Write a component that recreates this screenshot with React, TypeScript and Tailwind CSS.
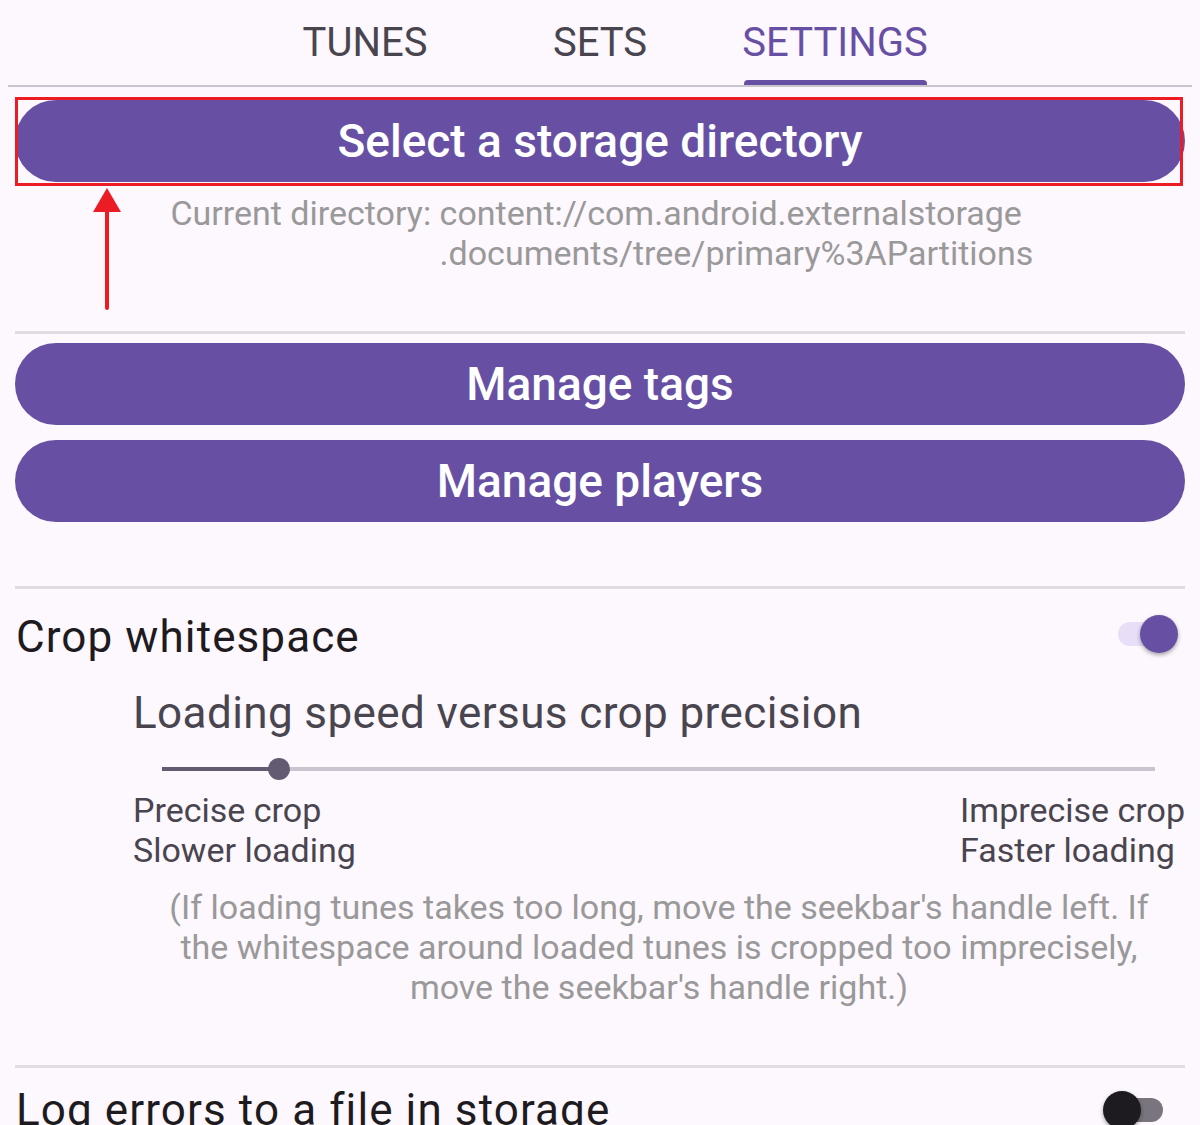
import React from "react";

const Divider: React.FC<{ className?: string }> = ({ className = "" }) => (
  <div className={`h-[3px] bg-[#e0dce2] ${className}`} />
);

const PillButton: React.FC<{ label: string; className?: string }> = ({ label, className = "" }) => (
  <button
    className={`flex h-[82px] w-full items-center justify-center rounded-full bg-[#6750a4] text-[46px] font-medium text-white ${className}`}
  >
    {label}
  </button>
);

const Switch: React.FC<{ on: boolean }> = ({ on }) =>
  on ? (
    <div className="relative -top-[3px] mr-[7px] h-[40px] w-[64px]">
      <div className="absolute left-[4px] top-[8px] h-[24px] w-[56px] rounded-full bg-[#e8def8]" />
      <div className="absolute right-[0px] top-[1px] h-[38px] w-[38px] rounded-full bg-[#6750a4] shadow-[0_2px_4px_rgba(0,0,0,0.35)]" />
    </div>
  ) : (
    <div className="relative mr-[22px] h-[40px] w-[62px]">
      <div className="absolute left-[18px] top-[8px] h-[24px] w-[44px] rounded-full bg-[#79747e]" />
      <div className="absolute left-[2px] top-[1px] h-[38px] w-[38px] rounded-full bg-[#1d1b20] shadow-[0_2px_4px_rgba(0,0,0,0.35)]" />
    </div>
  );

export default function App() {
  const tabs = ["TUNES", "SETS", "SETTINGS"];
  return (
    <div className="h-[1125px] w-[1200px] overflow-hidden bg-[#fdf7fe] font-['Roboto',sans-serif]">
      {/* Tabs */}
      <div className="flex h-[85px] justify-center">
        {tabs.map((t) => {
          const active = t === "SETTINGS";
          return (
            <div key={t} className="flex w-[235px] flex-col items-center">
              <div
                className={`mt-[19px] text-[40px] leading-[48px] ${active ? "text-[#6750a4]" : "text-[#49454f]"}`}
              >
                {t}
              </div>
              {active && <div className="mt-auto h-[5px] w-[183px] rounded-t-[4px] bg-[#6750a4]" />}
            </div>
          );
        })}
      </div>
      <div className="mx-[8px] h-[2px] bg-[#cac4d0]" />

      <div className="px-[15px]">
        {/* Storage directory */}
        <div className="relative mt-[13px]">
          <PillButton label="Select a storage directory" />
          <div className="pointer-events-none absolute -top-[3px] left-[0px] h-[89px] w-[1168px] border-[3px] border-[#ec1c24]" />
          <svg className="absolute left-[78px] top-[86px]" width="30" height="126" viewBox="0 0 30 126">
            <polygon points="14,2 28,26 0,26" fill="#ec1c24" />
            <line x1="14" y1="20" x2="14" y2="122" stroke="#ec1c24" strokeWidth="4" strokeLinecap="round" />
          </svg>
        </div>
        <div className="mt-[11px] flex justify-center pl-[10px] text-[34px] leading-[40px] text-[#999999]">
          <span className="whitespace-pre">Current directory: </span>
          <span className="w-[600px]">content://com.android.externalstorage .documents/tree/primary%3APartitions</span>
        </div>

        <Divider className="mt-[58px]" />
        <PillButton label="Manage tags" className="mt-[9px]" />
        <PillButton label="Manage players" className="mt-[15px]" />
        <Divider className="mt-[64px]" />

        {/* Crop whitespace */}
        <div className="mt-[24px] flex items-center justify-between">
          <span className="pl-[1px] text-[44px] leading-[48px] tracking-[1.1px] text-[#1d1b20]">Crop whitespace</span>
          <Switch on />
        </div>
        <div className="pl-[118px]">
          <div className="mt-[28px] text-[44px] leading-[48px] tracking-[0.4px] text-[#49454f]">
            Loading speed versus crop precision
          </div>
          <div className="relative mt-[20px] h-[24px] pl-[29px] pr-[30px]">
            <div className="flex h-full items-center">
              <div className="h-[4px] w-[117px] bg-[#625b71]" />
              <div className="h-[4px] flex-1 bg-[#cac4d0]" />
            </div>
            <div className="absolute left-[135px] top-[1px] h-[22px] w-[22px] rounded-full bg-[#625b71]" />
          </div>
          <div className="mt-[9px] flex justify-between text-[34px] leading-[40px] text-[#49454f]">
            <div>
              Precise crop
              <br />
              Slower loading
            </div>
            <div>
              Imprecise crop
              <br />
              Faster loading
            </div>
          </div>
          <div className="mt-[17px] px-[26px] text-center text-[34px] leading-[40px] text-[#999999]">
            (If loading tunes takes too long, move the seekbar's handle left. If the whitespace around loaded tunes is
            cropped too imprecisely, move the seekbar's handle right.)
          </div>
        </div>

        <Divider className="mt-[58px]" />
        <div className="mt-[18px] flex items-center justify-between">
          <span className="pl-[1px] text-[44px] leading-[48px] tracking-[1.1px] text-[#1d1b20]">
            Log errors to a file in storage
          </span>
          <Switch on={false} />
        </div>
      </div>
    </div>
  );
}
